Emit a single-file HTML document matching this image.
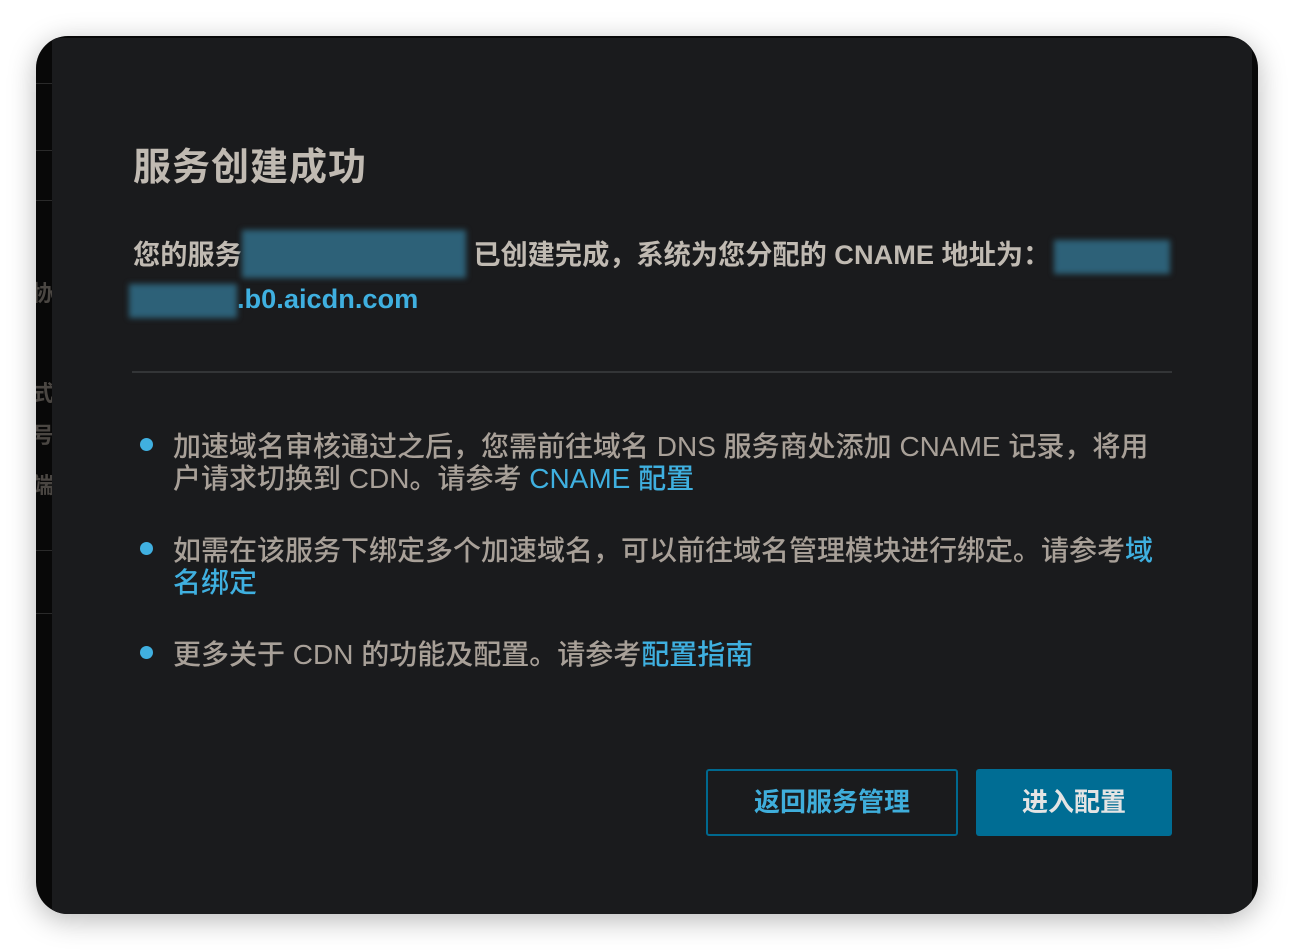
<!DOCTYPE html>
<html><head><meta charset="utf-8"><style>
*{margin:0;padding:0;box-sizing:border-box}
body{width:1294px;height:950px;background:#fff;position:relative;overflow:hidden;font-family:"Liberation Sans","Noto Sans CJK SC",sans-serif}
.win{position:absolute;left:36px;top:36px;width:1222px;height:878px;border-radius:32px;background:#080808;overflow:hidden;box-shadow:0 6px 28px rgba(0,0,0,.28)}
.hl{position:absolute;left:0;width:20px;height:1px;background:#2a2a2a}
.lt{position:absolute;left:-4px;color:#4a4642;font-size:22px;font-weight:bold}
.dlg{position:absolute;left:16px;top:2px;width:1200px;height:878px;background:#1a1b1d}
h1{position:absolute;left:81px;top:98px;font-size:38px;color:#c0bab2;font-weight:bold;letter-spacing:1px}
.p1{position:absolute;left:81px;top:196px;width:1070px;font-size:27.2px;font-weight:bold;color:#c0bab2;line-height:42px;white-space:nowrap}
.blur{display:inline-block;background:#2d6178;filter:blur(3px);vertical-align:middle}
.lk{color:#3fb0e0}
.hr{position:absolute;left:80px;top:333px;width:1040px;height:2px;background:#333537}
.li{position:absolute;left:121px;font-size:28px;color:#a8a098;line-height:32px;width:985px;font-weight:500}
.dot{position:absolute;left:88px;width:13px;height:13px;border-radius:50%;background:#40b0e0}
.b1{position:absolute;left:654px;top:731px;width:252px;height:67px;border:2px solid #00698f;border-radius:3px;color:#3faedb;font-size:26px;font-weight:bold;text-align:center;line-height:63px}
.b2{position:absolute;left:924px;top:731px;width:196px;height:67px;background:#006d94;border-radius:3px;color:#e4e4e4;font-size:26px;font-weight:bold;text-align:center;line-height:67px}
</style></head><body>
<div class="win">
<div class="hl" style="top:47px"></div><div class="hl" style="top:114px"></div><div class="hl" style="top:164px"></div>
<div class="hl" style="top:514px"></div><div class="hl" style="top:577px"></div>
<div class="lt" style="top:240px">协</div><div class="lt" style="top:340px">式</div><div class="lt" style="top:382px">号</div><div class="lt" style="top:432px">端</div>
<div class="dlg">
<h1>服务创建成功</h1>
<div class="p1">您的服务<span class="blur" style="width:224px;height:48px;margin-top:-6px"></span> 已创建完成，系统为您分配的 CNAME 地址为：<span class="blur" style="width:116px;height:34px;margin-left:4px"></span><br><span class="blur" style="width:108px;height:34px;margin-left:-4px"></span><span class="lk">.b0.aicdn.com</span></div>
<div class="hr"></div>
<div class="dot" style="top:400px"></div>
<div class="li" style="top:393px">加速域名审核通过之后，您需前往域名 DNS 服务商处添加 CNAME 记录，将用户请求切换到 CDN。请参考 <span class="lk">CNAME 配置</span></div>
<div class="dot" style="top:504px"></div>
<div class="li" style="top:497px">如需在该服务下绑定多个加速域名，可以前往域名管理模块进行绑定。请参考<span class="lk">域名绑定</span></div>
<div class="dot" style="top:608px"></div>
<div class="li" style="top:601px">更多关于 CDN 的功能及配置。请参考<span class="lk">配置指南</span></div>
<div class="b1">返回服务管理</div>
<div class="b2">进入配置</div>
</div>
</div>
</body></html>
